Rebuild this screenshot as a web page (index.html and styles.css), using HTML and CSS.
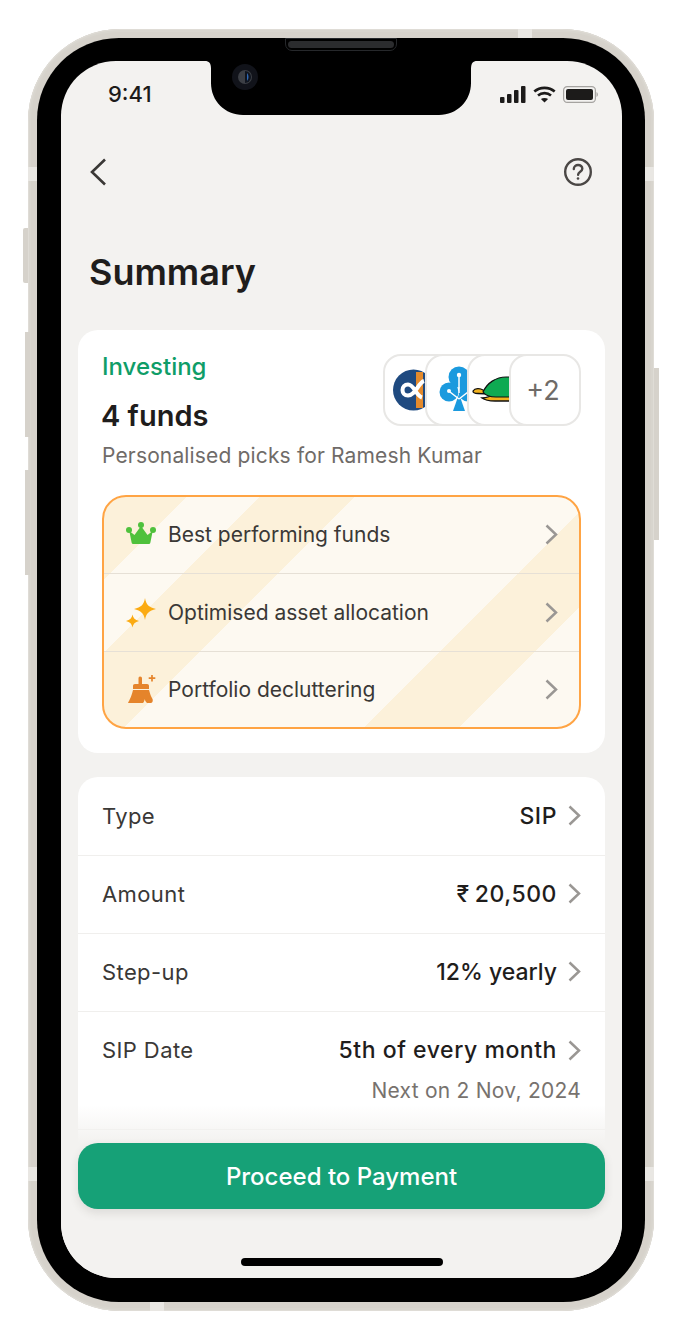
FILE: index.html
```html
<!DOCTYPE html>
<html lang="en">

<head>
    <meta charset="UTF-8">
    <meta name="viewport" content="width=device-width, initial-scale=1.0">
    <title>Summary</title>
    <link rel="stylesheet" href="styles.css">
</head>

<body>
    <div class="phone">
        <span class="side-btn mute"></span>
        <span class="side-btn vol-up"></span>
        <span class="side-btn vol-down"></span>
        <span class="side-btn power"></span>
        <span class="band band-lt"></span>
        <span class="band band-rt"></span>
        <span class="band band-lb"></span>
        <span class="band band-rb"></span>
        <span class="band-h band-top"></span>
        <span class="band-h band-bottom"></span>

        <div class="bezel">
            <div class="speaker"></div>
            <div class="screen">
                <svg class="notch" width="272" height="54" viewBox="0 0 272 54">
                    <path d="M0 0C4 0 6 2 6 8V22C6 40 20 54 38 54H234C252 54 266 40 266 22V8C266 2 268 0 272 0Z" fill="#000" />
                </svg>
                <svg class="camera" width="28" height="28" viewBox="0 0 28 28">
                    <circle cx="14" cy="14" r="13" fill="#11131a" />
                    <circle cx="14" cy="14" r="7" fill="#3c3f45" />
                    <path d="M14 8a6 6 0 0 1 0 12z" fill="#10151f" />
                    <path d="M16 10a6 6 0 0 1 0 8z" fill="#2f69b5" />
                </svg>

                <div class="statusbar">
                    <span class="time">9:41</span>
                    <div class="status-icons">
                        <svg width="26" height="17" viewBox="0 0 26 17" fill="#1c1b1a">
                            <rect x="0" y="11" width="4.5" height="6" rx="1" />
                            <rect x="7" y="8" width="4.5" height="9" rx="1" />
                            <rect x="14" y="4" width="4.5" height="13" rx="1" />
                            <rect x="21" y="0" width="4.5" height="17" rx="1" />
                        </svg>
                        <svg width="23" height="17" viewBox="0 0 23 17" fill="none" stroke="#1c1b1a" stroke-width="2.6">
                            <path d="M1.3 5.6C7 .6 16 .6 21.7 5.6" />
                            <path d="M5 9.4c3.6-3 9.4-3 13 0" />
                            <path d="M11.5 16.6l-3.6-3.6c2-1.4 5.2-1.4 7.2 0z" fill="#1c1b1a" stroke="none" />
                        </svg>
                        <svg width="35" height="17" viewBox="0 0 35 17">
                            <rect x=".6" y=".6" width="31.8" height="15.8" rx="3.6" fill="none" stroke="#a5a3a0" stroke-width="1.2" />
                            <rect x="3" y="3" width="27" height="11" rx="2" fill="#1c1b1a" />
                            <path d="M33.500 6v5c.8-.4 1.400-1.400 1.400-2.500S34.300 6.400 33.500 6z" fill="#a5a3a0" />
                        </svg>
                    </div>
                </div>

                <div class="nav">
                    <svg width="18" height="28" viewBox="0 0 18 28" fill="none" stroke="#3a3836" stroke-width="2.6">
                        <path d="M16 1.500 3 14l13 12.500" />
                    </svg>
                    <svg width="30" height="30" viewBox="0 0 30 30" fill="none" stroke="#4a4745" stroke-width="2.4">
                        <circle cx="15" cy="15" r="12.800" />
                        <path d="M10.800 12c0-2.500 2-4 4.300-4s4.200 1.500 4.200 3.700c0 3-4.200 3-4.200 6" stroke-linecap="round" />
                        <circle cx="15" cy="21.500" r="1.300" fill="#4a4745" stroke="none" />
                    </svg>
                </div>

                <h1 class="title">Summary</h1>

                <section class="card funds-card">
                    <div class="funds-top">
                        <div>
                            <div class="investing">Investing</div>
                            <div class="fund-count">4 funds</div>
                        </div>
                        <div class="logos">
                            <div class="logo">
                                <svg width="68" height="68" viewBox="0 0 68 68">
                                    <circle cx="28.500" cy="34" r="20.500" fill="#1f4a80" />
                                    <rect x="31" y="16" width="7" height="36" fill="#e48a2c" />
                                    <path d="M39 25c-6 2-8 14-16 14.500-3.500 0-5.500-2.500-5.500-5.500s2-5.500 5.500-5.500c6 0 8 11 14 13" fill="none" stroke="#fff" stroke-width="4" />
                                </svg>
                            </div>
                            <div class="logo">
                                <svg width="68" height="68" viewBox="0 0 68 68" fill="#1b9ade">
                                    <circle cx="32" cy="21" r="10.500" />
                                    <circle cx="22" cy="36" r="9.500" />
                                    <circle cx="41" cy="36" r="9.500" />
                                    <path d="M32 38 38 55H26z" />
                                    <path d="M32 20v17M23 36 32 43M41 36 32 43" stroke="#fff" stroke-width="1.500" fill="none" />
                                    <circle cx="32" cy="19" r="2.200" fill="#fff" />
                                    <circle cx="22" cy="35" r="2" fill="#fff" />
                                </svg>
                            </div>
                            <div class="logo">
                                <svg width="68" height="68" viewBox="0 0 68 68">
                                    <path d="M13 42c6 0 9-3 15-3h20v6H26c-5 0-9 0-13-3z" fill="#f2b21e" stroke="#111" stroke-width="1.300" />
                                    <path d="M4 35c2-3 7-3 10-1l5 4-10-.5C6 37.500 4 37 4 35z" fill="#f2b21e" stroke="#111" stroke-width="1.300" />
                                    <path d="M14 36c4-9 13-15 23-15h11v20H27c-6 0-10-1-13-5z" fill="#0eaa52" stroke="#111" stroke-width="1.200" />
                                </svg>
                            </div>
                            <div class="logo logo-more">+2</div>
                        </div>
                    </div>
                    <p class="picks">Personalised picks for Ramesh Kumar</p>

                    <div class="highlights">
                        <div class="highlight-row">
                            <svg width="30" height="30" viewBox="0 0 30 30" fill="#4fc13c">
                                <circle cx="15" cy="6" r="3" />
                                <circle cx="3" cy="11" r="3" />
                                <circle cx="27" cy="11" r="3" />
                                <path d="M3.300 12 8.500 16 15 7l6.500 9 5.200-4-2.300 11.500c-.2 1-1 1.500-2 1.500H7.600c-1 0-1.800-.5-2-1.500z" />
                            </svg>
                            <span class="highlight-text">Best performing funds</span>
                            <svg class="chev" width="13" height="21" viewBox="0 0 13 21" fill="none" stroke="#9a9794" stroke-width="2.500">
                                <path d="M1.500 1.500 11 10.500l-9.500 9" />
                            </svg>
                        </div>
                        <div class="highlight-row">
                            <svg width="30" height="30" viewBox="0 0 30 30" fill="#fbab13">
                                <path d="M19 0c1 6.500 4 9.500 11 11-7 1.500-10 4.500-11 11-1-6.500-4-9.500-11-11 7-1.500 10-4.500 11-11z" />
                                <path d="M6.500 16.500c.5 3.500 2.500 5.500 6.500 6.500-4 1-6 3-6.500 6.500C6 26 4 24 0 23c4-1 6-3 6.500-6.500z" />
                            </svg>
                            <span class="highlight-text">Optimised asset allocation</span>
                            <svg class="chev" width="13" height="21" viewBox="0 0 13 21" fill="none" stroke="#9a9794" stroke-width="2.500">
                                <path d="M1.500 1.500 11 10.500l-9.500 9" />
                            </svg>
                        </div>
                        <div class="highlight-row">
                            <svg width="30" height="30" viewBox="0 0 30 30" fill="#e5842b">
                                <path d="M14 1.500c1.500 0 2 .8 2 2V9h5c1.300 0 2 .8 2 2v3H7v-3c0-1.200.7-2 2-2h3.500V3.500c0-1.200.5-2 1.500-2z" />
                                <path d="M7 15h16c1 3.500 2 6.500 3.500 9 .6 1 .2 4-1.500 4h-4c-1.500-1-2-3-2.300-4-.3 1.500-.7 3.300-1.700 4H2c0-.2 3.500-6 5-13z" />
                                <path d="M26 0v6.500M22.700 3.200h6.600" stroke="#e5842b" stroke-width="1.700" fill="none" />
                            </svg>
                            <span class="highlight-text">Portfolio decluttering</span>
                            <svg class="chev" width="13" height="21" viewBox="0 0 13 21" fill="none" stroke="#9a9794" stroke-width="2.500">
                                <path d="M1.500 1.500 11 10.500l-9.500 9" />
                            </svg>
                        </div>
                    </div>
                </section>

                <section class="card details-card">
                    <div class="detail-row">
                        <span class="detail-label">Type</span>
                        <span class="detail-value">SIP</span>
                        <svg class="chev" width="13" height="21" viewBox="0 0 13 21" fill="none" stroke="#9a9794" stroke-width="2.500">
                            <path d="M1.500 1.500 11 10.500l-9.500 9" />
                        </svg>
                    </div>
                    <div class="detail-row">
                        <span class="detail-label">Amount</span>
                        <span class="detail-value"><span class="rupee">₹</span>20,500</span>
                        <svg class="chev" width="13" height="21" viewBox="0 0 13 21" fill="none" stroke="#9a9794" stroke-width="2.500">
                            <path d="M1.500 1.500 11 10.500l-9.500 9" />
                        </svg>
                    </div>
                    <div class="detail-row">
                        <span class="detail-label">Step-up</span>
                        <span class="detail-value value-tight">12% yearly</span>
                        <svg class="chev" width="13" height="21" viewBox="0 0 13 21" fill="none" stroke="#9a9794" stroke-width="2.500">
                            <path d="M1.500 1.500 11 10.500l-9.500 9" />
                        </svg>
                    </div>
                    <div class="detail-row detail-row-tall">
                        <div class="detail-line">
                            <span class="detail-label">SIP Date</span>
                            <span class="detail-value">5th of every month</span>
                            <svg class="chev" width="13" height="21" viewBox="0 0 13 21" fill="none" stroke="#9a9794" stroke-width="2.500">
                                <path d="M1.500 1.500 11 10.500l-9.500 9" />
                            </svg>
                        </div>
                        <div class="next-date">Next on 2 Nov, 2024</div>
                    </div>
                </section>

                <div class="footer">
                    <button class="pay-btn">Proceed to Payment</button>
                    <div class="home-bar"></div>
                </div>
            </div>
        </div>
    </div>
</body>

</html>
```

FILE: styles.css
```css
* {
    box-sizing: border-box;
}

body {
    margin: 0;
    width: 683px;
    height: 1338px;
    padding: 29px 0 0 28px;
    background-color: #fff;
    font-family: 'Inter', 'Liberation Sans', sans-serif;
    overflow: hidden;
}

/* phone frame */
.phone {
    position: relative;
    width: 626px;
    height: 1282px;
    padding: 9px;
    border-radius: 92px;
    background-color: #d6d2cb;
    box-shadow: inset 0 0 0 1px #dfdcd6, inset 0 0 0 3px #d8d5ce;
}

.side-btn {
    position: absolute;
    width: 5px;
    background-color: #d6d2cb;
}

.mute {
    left: -5px;
    top: 199px;
    height: 55px;
    border-radius: 2px 0 0 2px;
}

.vol-up {
    left: -3px;
    top: 303px;
    height: 105px;
}

.vol-down {
    left: -3px;
    top: 441px;
    height: 105px;
}

.power {
    right: -5px;
    top: 339px;
    height: 172px;
}

.band,
.band-h {
    position: absolute;
    background-color: #e9e7e3;
}

.band {
    width: 9px;
    height: 14px;
}

.band-h {
    width: 14px;
    height: 9px;
}

.band-lt {
    left: 0;
    top: 138px;
}

.band-rt {
    right: 0;
    top: 138px;
}

.band-lb {
    left: 0;
    top: 1138px;
}

.band-rb {
    right: 0;
    top: 1138px;
}

.band-top {
    top: 0;
    left: 490px;
}

.band-bottom {
    bottom: 0;
    left: 122px;
}

.bezel {
    position: relative;
    width: 608px;
    height: 1264px;
    padding: 23px 23px 22px 24px;
    border-radius: 82px;
    background-color: #000;
}

.speaker {
    position: absolute;
    top: 0;
    left: 248px;
    width: 112px;
    height: 13px;
    border: 1px solid #26282b;
    border-radius: 0 0 7px 7px;
    z-index: 2;
}

.speaker::after {
    content: "";
    display: block;
    margin: 2px;
    height: 7px;
    border-radius: 4px;
    background-color: #2b2c2e;
}

.screen {
    position: relative;
    height: 1217px;
    border-radius: 55px;
    background-color: #f3f2f0;
    overflow: hidden;
}

.notch {
    position: absolute;
    top: 0;
    left: 144px;
    z-index: 2;
}

.camera {
    position: absolute;
    top: 2px;
    left: 170px;
    z-index: 3;
}

/* status bar */
.statusbar {
    display: flex;
    justify-content: space-between;
    align-items: center;
    height: 66px;
    padding: 0 24px 0 47px;
}

.time {
    font-size: 22px;
    font-weight: 500;
    color: #1c1b1a;
}

.status-icons {
    display: flex;
    align-items: center;
    gap: 7px;
}

/* nav */
.nav {
    display: flex;
    justify-content: space-between;
    align-items: center;
    height: 90px;
    padding: 0 29px 0 28px;
}

.title {
    margin: 33px 0 36px 28px;
    font-size: 36px;
    line-height: 44px;
    font-weight: 600;
    color: #1f1d1c;
}

/* cards */
.card {
    margin: 0 17px;
    background-color: #fff;
    border-radius: 20px;
}

.funds-card {
    padding: 24px;
}

.funds-top {
    display: flex;
    justify-content: space-between;
    align-items: flex-start;
    height: 80px;
}

.investing {
    font-size: 24px;
    line-height: 26px;
    font-weight: 500;
    color: #0f9d68;
}

.fund-count {
    margin: 18px 0 0 -1px;
    font-size: 29px;
    line-height: 36px;
    font-weight: 600;
    color: #1f1d1c;
}

.logos {
    display: flex;
}

.logo {
    width: 72px;
    height: 72px;
    border: 2px solid #e8e7e5;
    border-radius: 18px;
    background-color: #fff;
    overflow: hidden;
}

.logo+.logo {
    margin-left: -30px;
}

.logo svg {
    display: block;
}

.logo-more {
    display: flex;
    justify-content: center;
    align-items: center;
    padding-right: 4px;
    font-size: 27px;
    color: #6f6b68;
}

.picks {
    margin: 8px 0 25px;
    font-size: 21px;
    line-height: 28px;
    letter-spacing: 0.15px;
    color: #6f6b68;
}

.highlights {
    border: 2px solid #ffa444;
    border-radius: 24px;
    background-image: linear-gradient(135deg,
            #fcf1da 58px, #fdf9f1 58px,
            #fdf9f1 110px, #fcf1da 110px,
            #fcf1da 177px, #fdf9f1 177px,
            #fdf9f1 347px, #fcf1da 347px,
            #fcf1da 414px, #fdf9f1 414px);
}

.highlight-row {
    display: flex;
    align-items: center;
    gap: 12px;
    height: 76px;
    padding: 0 21px 0 22px;
}

.highlight-row:first-child {
    padding-bottom: 2px;
}

.highlight-row+.highlight-row {
    border-top: 1px solid #e6e0d6;
}

.highlight-row:nth-child(2) {
    height: 78px;
}

.highlight-text {
    flex: 1;
    font-size: 21px;
    color: #3a3836;
}

.details-card {
    margin-top: 24px;
    padding-top: 1px;
    padding-bottom: 120px;
}

.detail-row {
    display: flex;
    align-items: center;
    gap: 11px;
    height: 78px;
    padding: 0 24px 2px;
    border-bottom: 1px solid #f0efed;
}

.detail-row-tall {
    display: block;
    height: 118px;
    padding-top: 24px;
}

.detail-line {
    display: flex;
    align-items: center;
    gap: 11px;
}

.detail-label {
    flex: 1;
    font-size: 22px;
    letter-spacing: 0.4px;
    color: #3a3836;
}

.detail-value {
    font-size: 23px;
    font-weight: 500;
    letter-spacing: 0.55px;
    color: #1f1d1c;
}

.value-tight {
    letter-spacing: 0;
}

.rupee {
    margin-right: 5px;
}

.next-date {
    margin-top: 14px;
    text-align: right;
    font-size: 21px;
    line-height: 26px;
    letter-spacing: 0.25px;
    color: #77726e;
}

/* bottom bar */
.footer {
    position: absolute;
    left: 0;
    right: 0;
    bottom: 0;
    height: 173px;
    padding: 38px 17px 0;
    background-image: linear-gradient(rgba(243, 242, 240, 0), #f3f2f0 38px);
}

.pay-btn {
    display: block;
    width: 100%;
    height: 66px;
    border: none;
    border-radius: 20px;
    background-color: #16a177;
    color: #fff;
    font-family: inherit;
    font-size: 24px;
    font-weight: 500;
    box-shadow: 0 4px 10px rgba(60, 50, 40, 0.12);
}

.home-bar {
    position: absolute;
    left: 180px;
    bottom: 12px;
    width: 202px;
    height: 8px;
    border-radius: 4px;
    background-color: #000;
}
```
